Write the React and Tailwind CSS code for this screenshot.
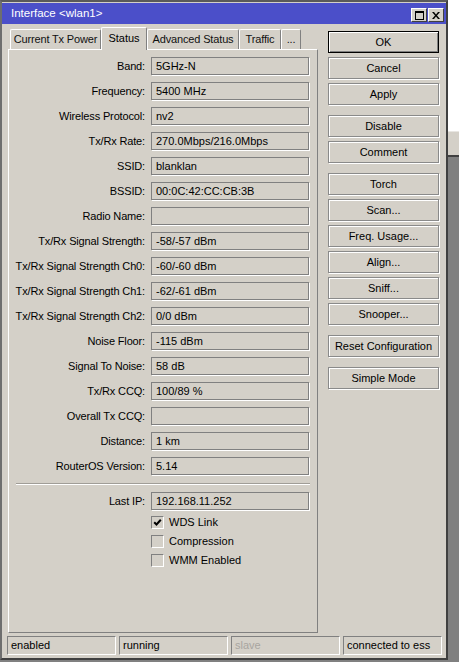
import React from 'react';

const rows = [
  ['Band:', '5GHz-N'],
  ['Frequency:', '5400 MHz'],
  ['Wireless Protocol:', 'nv2'],
  ['Tx/Rx Rate:', '270.0Mbps/216.0Mbps'],
  ['SSID:', 'blanklan'],
  ['BSSID:', '00:0C:42:CC:CB:3B'],
  ['Radio Name:', ''],
  ['Tx/Rx Signal Strength:', '-58/-57 dBm'],
  ['Tx/Rx Signal Strength Ch0:', '-60/-60 dBm'],
  ['Tx/Rx Signal Strength Ch1:', '-62/-61 dBm'],
  ['Tx/Rx Signal Strength Ch2:', '0/0 dBm'],
  ['Noise Floor:', '-115 dBm'],
  ['Signal To Noise:', '58 dB'],
  ['Tx/Rx CCQ:', '100/89 %'],
  ['Overall Tx CCQ:', ''],
  ['Distance:', '1 km'],
  ['RouterOS Version:', '5.14'],
];

const buttonGroups = [
  ['OK', 'Cancel', 'Apply'],
  ['Disable', 'Comment'],
  ['Torch', 'Scan...', 'Freq. Usage...', 'Align...', 'Sniff...', 'Snooper...'],
  ['Reset Configuration'],
  ['Simple Mode'],
];

const tabs = [
  { label: 'Current Tx Power', w: 'w-[91px]' },
  { label: 'Status', w: 'w-[46px]', active: true },
  { label: 'Advanced Status', w: 'w-[92px]' },
  { label: 'Traffic', w: 'w-[42px]' },
  { label: '...', w: 'w-[20px]' },
];

function Row({ label, value }) {
  return (
    <div className="flex items-center h-[18px]">
      <div className="w-[137px] text-right pr-px tracking-[-0.15px] whitespace-nowrap">{label}</div>
      <div className="ml-[5px] w-[158px] h-[18px] border border-[#808080] shadow-[1px_1px_0_#fff] pl-[4px] flex items-center whitespace-nowrap">
        {value}
      </div>
    </div>
  );
}

function Check({ label, checked }) {
  return (
    <div className="flex items-center h-[19px] pl-[142px]">
      <div className="w-[13px] h-[13px] border border-t-[#808080] border-l-[#808080] border-b-white border-r-white bg-[#d4d0c8] flex items-center justify-center">
        {checked && (
          <svg width="9" height="9" viewBox="0 0 9 9">
            <path d="M1.2 4.2 L3.5 6.5 L7.8 1.8" fill="none" stroke="#000" strokeWidth="2" />
          </svg>
        )}
      </div>
      <span className="ml-[5px]">{label}</span>
    </div>
  );
}

function Btn({ label, main }) {
  return (
    <div
      className={`h-[22px] w-[111px] flex items-center justify-center border ${
        main ? 'border-black shadow-[inset_1px_1px_0_#fff,inset_-1px_-1px_0_#808080]' : 'border-[#8a8a8a] shadow-[inset_1px_1px_0_#fff,1px_1px_0_#fff]'
      }`}
    >
      {label}
    </div>
  );
}

function Status({ text, w, dim }) {
  return (
    <div className={`${w} h-[19px] border border-t-[#808080] border-l-[#808080] border-b-white border-r-white flex items-center pl-[3px] ${dim ? 'text-[#a8a5a0]' : ''}`}>
      {text}
    </div>
  );
}

export default function App() {
  return (
    <div className="w-[459px] h-[662px] flex bg-[#808080] font-['Liberation_Sans',Arial,sans-serif] text-[11px] text-black leading-none overflow-hidden">
      {/* window */}
      <div className="w-[448px] h-[660px] shrink-0 flex flex-col bg-[#d4d0c8] border-2 border-t-[#5a5a5a] border-l-[#6e6e6e] border-r-[#404040] border-b-[#404040]">
        {/* title bar */}
        <div className="mt-px h-[21px] bg-[#4b4fc9] flex items-center justify-between pl-[9px] pr-[2px]">
          <span className="text-white text-[11.5px]">Interface &lt;wlan1&gt;</span>
          <div className="flex gap-px mt-[3px]">
            <div className="w-[16px] h-[14px] bg-[#d4d0c8] border border-t-white border-l-white border-r-[#404040] border-b-[#404040] flex items-center justify-center">
              <svg width="9" height="9" viewBox="0 0 9 9">
                <rect x="0.5" y="0.5" width="8" height="8" fill="none" stroke="#000" />
                <rect x="0" y="0" width="9" height="2" fill="#000" />
              </svg>
            </div>
            <div className="w-[16px] h-[14px] bg-[#d4d0c8] border border-t-white border-l-white border-r-[#404040] border-b-[#404040] flex items-center justify-center">
              <svg width="8" height="7" viewBox="0 0 8 7">
                <path d="M0 0 H2 L4 2.5 L6 0 H8 L5 3.5 L8 7 H6 L4 4.5 L2 7 H0 L3 3.5 Z" fill="#000" />
              </svg>
            </div>
          </div>
        </div>

        {/* body */}
        <div className="flex pl-[6px] pt-[3px]">
          <div className="w-[310px] flex flex-col">
            {/* tabs */}
            <div className="h-[22px] flex items-end pl-[2px]">
              {tabs.map((t) =>
                t.active ? (
                  <div
                    key={t.label}
                    className={`${t.w} h-[23px] -mb-px relative z-10 bg-[#d4d0c8] border-t border-l border-r border-t-white border-l-white border-r-[#808080] rounded-t-[2px] flex items-center justify-center pb-[2px]`}
                  >
                    {t.label}
                  </div>
                ) : (
                  <div
                    key={t.label}
                    className={`${t.w} h-[20px] bg-[#d4d0c8] border-t border-l border-r border-t-white border-l-white border-r-[#808080] rounded-t-[2px] flex items-center justify-center text-[#111] tracking-[-0.15px]`}
                  >
                    {t.label}
                  </div>
                )
              )}
            </div>
            {/* panel */}
            <div className="h-[584px] border border-t-white border-l-white border-r-[#808080] border-b-[#808080] pt-[7px] flex flex-col">
              <div className="flex flex-col gap-[7px]">
                {rows.map(([l, v]) => (
                  <Row key={l} label={l} value={v} />
                ))}
              </div>
              <div className="mt-[8px] mx-[7px] h-[2px] border-t border-t-[#a09d97] border-b border-b-white" />
              <div className="mt-[7px]">
                <Row label="Last IP:" value="192.168.11.252" />
              </div>
              <div className="mt-[3px] flex flex-col">
                <Check label="WDS Link" checked />
                <Check label="Compression" />
                <Check label="WMM Enabled" />
              </div>
            </div>
          </div>

          {/* buttons */}
          <div className="ml-[10px] pt-[4px] flex flex-col gap-[10px]">
            {buttonGroups.map((g, i) => (
              <div key={i} className="flex flex-col gap-[4px]">
                {g.map((b) => (
                  <Btn key={b} label={b} main={b === 'OK'} />
                ))}
              </div>
            ))}
          </div>
        </div>

        {/* status bar */}
        <div className="mt-[3px] pl-[5px] flex gap-[3px]">
          <Status text="enabled" w="w-[109px]" />
          <Status text="running" w="w-[109px]" />
          <Status text="slave" w="w-[109px]" dim />
          <Status text="connected to ess" w="w-[99px]" />
        </div>
      </div>

      {/* background behind window */}
      <div className="flex-1 flex flex-col">
        <div className="h-[131px] bg-white" />
        <div className="h-[24px] bg-[#d4d0c8] border-t border-t-[#e8e6e2]" />
        <div className="h-[2px] bg-[#404040]" />
        <div className="flex-1 bg-[#808080]" />
      </div>
    </div>
  );
}
